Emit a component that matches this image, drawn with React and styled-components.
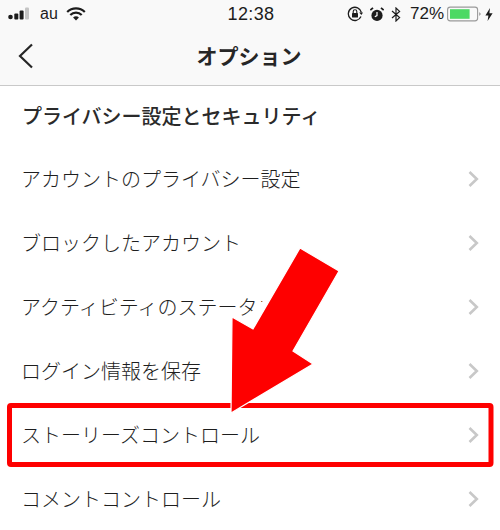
import React from "react";
import styled, { createGlobalStyle } from "styled-components";

const Global = createGlobalStyle`
  html, body { margin: 0; padding: 0; background: #fff; }
  * { box-sizing: border-box; }
`;

const Screen = styled.div`
  position: relative;
  width: 500px;
  height: 530px;
  overflow: hidden;
  background: #fff;
  color: #262626;
  font-family: "Noto Sans CJK JP", "Noto Sans", sans-serif;
`;

const Header = styled.header`
  height: 86px;
  background: #f9f9f9;
  border-bottom: 1.5px solid #c9c9c9;
`;

const StatusBar = styled.div`
  height: 28px;
  padding: 0 7px 0 8px;
  display: grid;
  grid-template-columns: 1fr auto 1fr;
  align-items: center;
  font-family: "Liberation Sans", Arial, sans-serif;
  font-size: 17px;
  color: #1c1c1c;
`;

const StatusGroup = styled.div`
  display: flex;
  align-items: center;
  gap: ${(p) => p.$gap}px;
  justify-content: ${(p) => (p.$end ? "flex-end" : "flex-start")};
`;

const Carrier = styled.span`
  font-size: 16px;
  margin-right: -2px;
`;

const Clock = styled.div`
  font-size: 18px;
  letter-spacing: 0.4px;
  margin-left: 1px;
`;

const Percent = styled.span`
  margin: 0 -4px 0 2px;
`;

const BoltSlot = styled.span`
  display: flex;
  margin-left: -3px;
`;

const NavBar = styled.div`
  position: relative;
  height: 56px;
  display: flex;
  align-items: center;
  justify-content: center;
  padding-bottom: 2px;
`;

const BackButton = styled.button`
  position: absolute;
  left: 17px;
  top: 15px;
  width: 18px;
  height: 26px;
  border: 0;
  padding: 0;
  background: none;
  display: flex;
`;

const Title = styled.h1`
  margin: 0 2px 0 0;
  font-size: 21px;
  font-weight: 700;
  line-height: 28px;
  color: #262626;
`;

const Section = styled.h2`
  margin: 0;
  height: 61px;
  padding: 0 22px 3px;
  display: flex;
  align-items: center;
  font-size: 20px;
  font-weight: 500;
  color: #2a2a2a;
`;

const List = styled.div`
  display: flex;
  flex-direction: column;
`;

const Row = styled.div`
  height: 64px;
  padding: 0 21px;
  display: flex;
  align-items: center;
  justify-content: space-between;
  font-size: 20px;
  font-weight: 300;
  color: #1e1e1e;
  white-space: nowrap;
`;

const RowLabel = styled.span`
  padding-bottom: 1px;
`;

const Overlay = styled.svg`
  position: absolute;
  inset: 0;
  width: 500px;
  height: 530px;
  pointer-events: none;
`;

const Chevron = () => (
  <svg width="11" height="16" viewBox="0 0 11 16" fill="none">
    <path d="M1.5 1 L8.8 8 L1.5 15" stroke="#c8c8c8" strokeWidth="2.6" />
  </svg>
);

const Signal = () => (
  <svg width="22" height="14" viewBox="0 0 22 14">
    <circle cx="2.5" cy="10" r="2.3" fill="#1c1c1c" />
    <rect x="6.3" y="6.5" width="4" height="6" rx="1" fill="#1c1c1c" />
    <rect x="11.6" y="3.5" width="4" height="9" rx="1" fill="#1c1c1c" />
    <rect x="17" y="0.5" width="4" height="12" rx="1" fill="#c4c4c4" />
  </svg>
);

const Wifi = () => (
  <svg width="20" height="14" viewBox="0 0 20 14" fill="none" stroke="#1c1c1c" strokeWidth="2.2">
    <path d="M1.2 5 A12.5 12.5 0 0 1 18.8 5" />
    <path d="M4.3 8 A8 8 0 0 1 15.7 8" />
    <path d="M10 13.6 L7.1 10.6 A4 4 0 0 1 12.9 10.6 Z" fill="#1c1c1c" stroke="none" />
  </svg>
);

const RotationLock = () => (
  <svg width="16" height="16" viewBox="0 0 16 16" fill="none">
    <path d="M14 10.5 A6.6 6.6 0 1 1 14.4 6.5" stroke="#1c1c1c" strokeWidth="1.3" />
    <path d="M12.2 6.4 L16 6.4 L14.4 9 Z" fill="#1c1c1c" />
    <rect x="5" y="7" width="6" height="4.6" rx="0.6" fill="#1c1c1c" />
    <path d="M6.2 7 V5.6 A1.8 1.8 0 0 1 9.8 5.6 V7" stroke="#1c1c1c" strokeWidth="1.1" />
  </svg>
);

const Alarm = () => (
  <svg width="14" height="15" viewBox="0 0 14 15" fill="none">
    <circle cx="7" cy="8.4" r="5.6" fill="#1c1c1c" />
    <path d="M7 5 V8.6 L4.8 9.8" stroke="#fff" strokeWidth="1.2" />
    <path d="M0.3 3.2 L3 0.8 M13.7 3.2 L11 0.8" stroke="#1c1c1c" strokeWidth="1.8" />
  </svg>
);

const Bluetooth = () => (
  <svg width="10" height="15" viewBox="0 0 10 15" fill="none" stroke="#1c1c1c" strokeWidth="1.2">
    <path d="M1 4 L8.6 10.6 L5 14 V1 L8.6 4.4 L1 11" />
  </svg>
);

const Battery = () => (
  <svg width="34" height="16" viewBox="0 0 34 16" fill="none">
    <rect x="0.6" y="1.1" width="30" height="13.8" rx="2.6" stroke="#9a9a9a" strokeWidth="1.1" />
    <rect x="3" y="3.2" width="19.6" height="9.6" fill="#4cd964" />
    <path d="M32.3 6 L33.8 8 L32.3 10 Z" fill="#8a8a8a" />
  </svg>
);

const Bolt = () => (
  <svg width="8" height="13" viewBox="0 0 8 13">
    <path d="M5 0 L0.4 7.4 H3.4 L2.6 13 L7.6 5.2 H4.4 Z" fill="#1c1c1c" />
  </svg>
);

const rows = [
  "アカウントのプライバシー設定",
  "ブロックしたアカウント",
  "アクティビティのステータス",
  "ログイン情報を保存",
  "ストーリーズコントロール",
  "コメントコントロール",
];

export default function App() {
  return (
    <Screen>
      <Global />
      <Header>
        <StatusBar>
          <StatusGroup $gap={10}>
            <Signal />
            <Carrier>au</Carrier>
            <Wifi />
          </StatusGroup>
          <Clock>12:38</Clock>
          <StatusGroup $end $gap={7}>
            <RotationLock />
            <Alarm />
            <Bluetooth />
            <Percent>72%</Percent>
            <Battery />
            <BoltSlot>
              <Bolt />
            </BoltSlot>
          </StatusGroup>
        </StatusBar>
        <NavBar>
          <BackButton aria-label="戻る">
            <svg width="18" height="26" viewBox="0 0 18 26" fill="none">
              <path d="M15 1.5 L3 13 L15 24.5" stroke="#262626" strokeWidth="2.2" />
            </svg>
          </BackButton>
          <Title>オプション</Title>
        </NavBar>
      </Header>
      <Section>プライバシー設定とセキュリティ</Section>
      <List>
        {rows.map((r) => (
          <Row key={r}>
            <RowLabel>{r}</RowLabel>
            <Chevron />
          </Row>
        ))}
      </List>
      <Overlay viewBox="0 0 500 530">
        <rect x="9.5" y="405.5" width="481.5" height="59" rx="1.5" fill="none" stroke="#fe0000" strokeWidth="5" />
        <polygon points="294,246 262,302 240,322 253,329 300,248" fill="#fff" />
        <polygon
          points="300,248 339,271 293,351 313,364 231,413 232,317 253,329"
          fill="#fe0000"
          stroke="#fff"
          strokeWidth="1.2"
        />
      </Overlay>
    </Screen>
  );
}
